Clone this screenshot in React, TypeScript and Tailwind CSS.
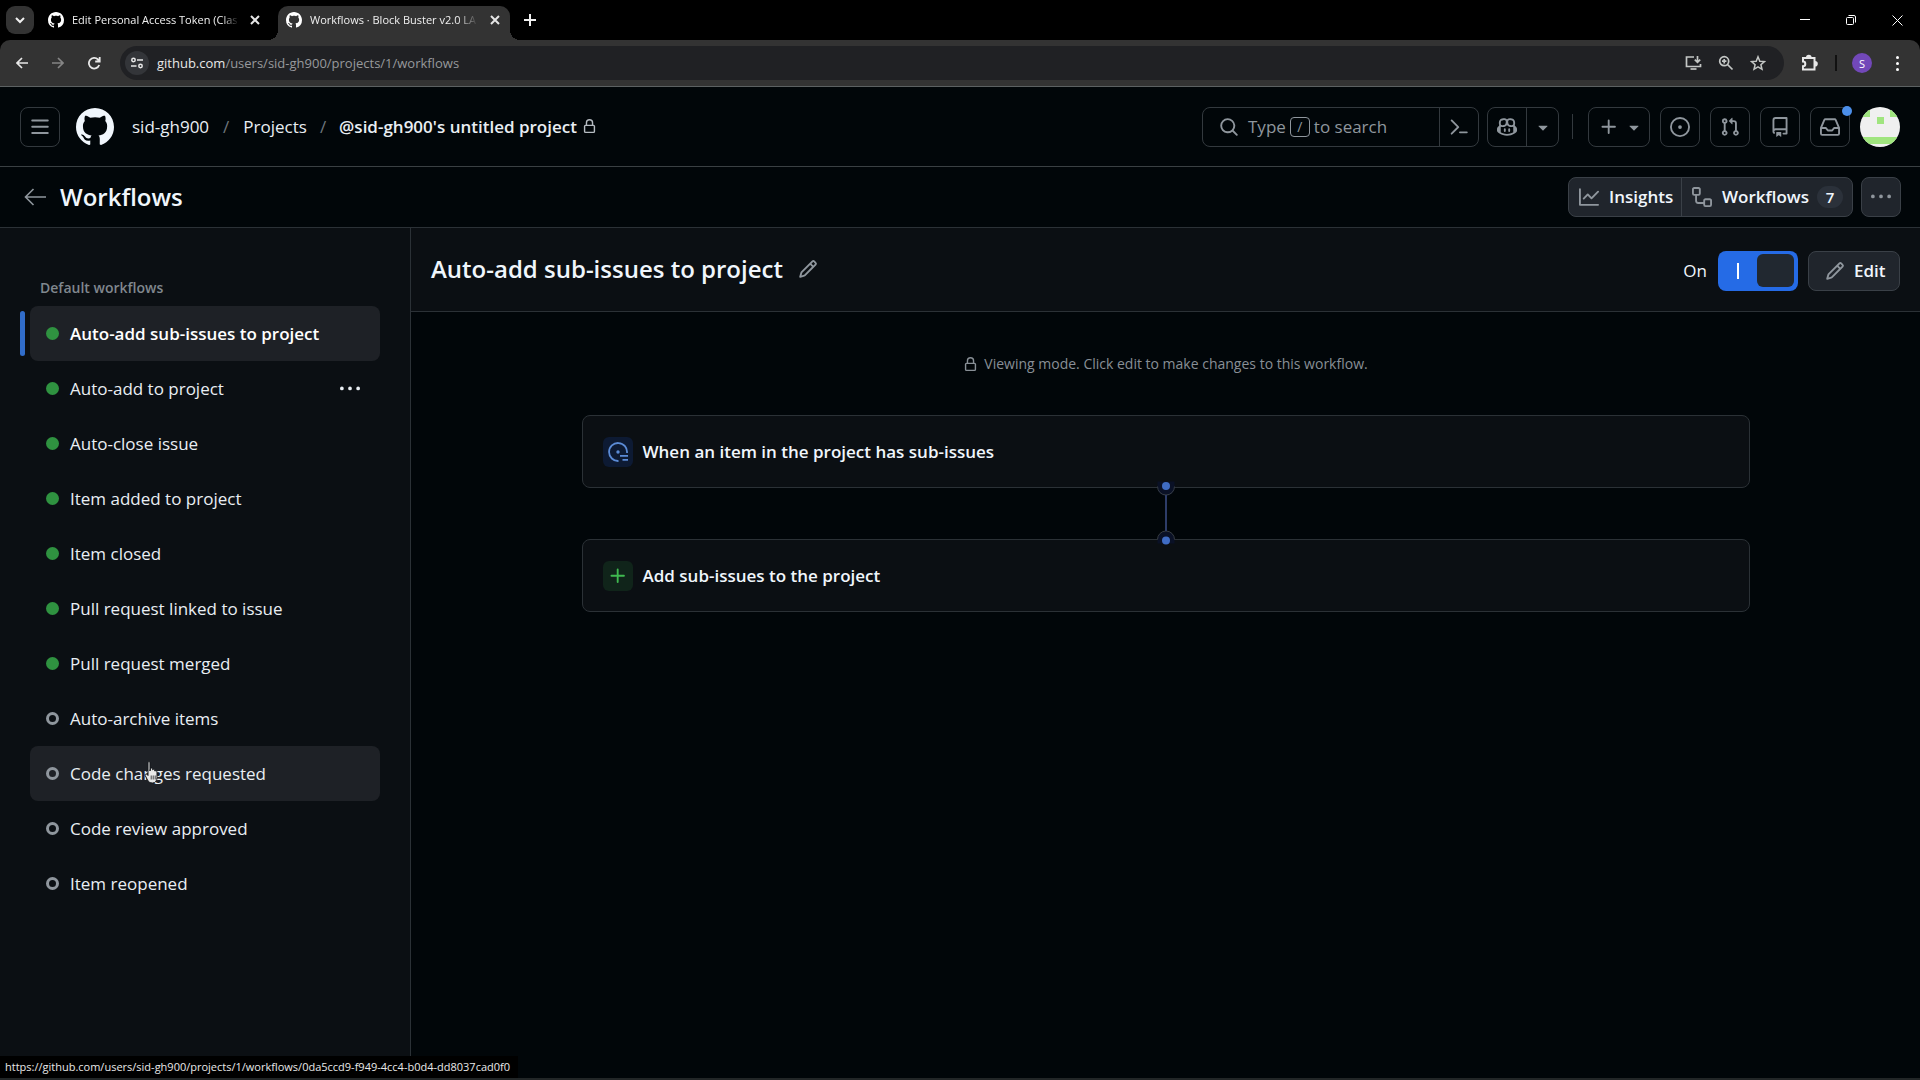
import type { ReactNode } from "react";

const PATHS = {
  github:
    "M8 0c4.42 0 8 3.58 8 8a8.013 8.013 0 0 1-5.45 7.59c-.4.08-.55-.17-.55-.38 0-.27.01-1.13.01-2.2 0-.75-.25-1.23-.54-1.48 1.78-.2 3.65-.88 3.65-3.95 0-.88-.31-1.59-.82-2.15.08-.2.36-1.02-.08-2.12 0 0-.67-.22-2.2.82-.64-.18-1.32-.27-2-.27-.68 0-1.36.09-2 .27-1.53-1.03-2.2-.82-2.2-.82-.44 1.1-.16 1.92-.08 2.12-.51.56-.82 1.28-.82 2.15 0 3.06 1.86 3.75 3.64 3.95-.23.2-.44.55-.51 1.07-.46.21-1.61.55-2.33-.66-.15-.24-.6-.83-1.23-.82-.67.01-.27.38.01.53.34.19.73.9.82 1.13.16.45.68 1.31 2.69.94 0 .67.01 1.3.01 1.49 0 .21-.15.45-.55.38A7.995 7.995 0 0 1 0 8c0-4.42 3.58-8 8-8Z",
  bars: "M1 2.75A.75.75 0 0 1 1.75 2h12.5a.75.75 0 0 1 0 1.5H1.75A.75.75 0 0 1 1 2.75Zm0 5A.75.75 0 0 1 1.75 7h12.5a.75.75 0 0 1 0 1.5H1.75A.75.75 0 0 1 1 7.75ZM1.75 12h12.5a.75.75 0 0 1 0 1.5H1.75a.75.75 0 0 1 0-1.5Z",
  lock: "M4 4a4 4 0 0 1 8 0v2h.25c.966 0 1.75.784 1.75 1.75v5.5A1.75 1.75 0 0 1 12.25 15h-8.5A1.75 1.75 0 0 1 2 13.25v-5.5C2 6.784 2.784 6 3.75 6H4Zm8.25 3.5h-8.5a.25.25 0 0 0-.25.25v5.5c0 .138.112.25.25.25h8.5a.25.25 0 0 0 .25-.25v-5.5a.25.25 0 0 0-.25-.25ZM10.5 6V4a2.5 2.5 0 1 0-5 0v2Z",
  search:
    "M10.68 11.74a6 6 0 0 1-7.922-8.982 6 6 0 0 1 8.982 7.922l3.04 3.04a.749.749 0 0 1-.326 1.275.749.749 0 0 1-.734-.215ZM11.5 7a4.499 4.499 0 1 0-8.997 0A4.499 4.499 0 0 0 11.5 7Z",
  command:
    "m6.354 8.04-4.773 4.773a.75.75 0 1 0 1.061 1.06L7.945 8.57a.75.75 0 0 0 0-1.06L2.642 2.206a.75.75 0 0 0-1.06 1.061L6.353 8.04ZM8.75 11.5a.75.75 0 0 0 0 1.5h5.5a.75.75 0 0 0 0-1.5h-5.5Z",
  copilot:
    "M7.998 15.035c-4.562 0-7.873-2.914-7.998-3.749V9.338c.085-.628.677-1.686 1.588-2.065.013-.07.024-.143.036-.218.029-.183.06-.384.126-.612-.201-.508-.254-1.084-.254-1.656 0-.87.128-1.769.693-2.484.579-.733 1.494-1.124 2.724-1.261 1.206-.134 2.262.034 2.944.765.05.053.096.108.139.165.044-.057.094-.112.143-.165.682-.731 1.738-.899 2.944-.765 1.23.137 2.145.528 2.724 1.261.566.715.693 1.614.693 2.484 0 .572-.053 1.148-.254 1.656.066.228.098.429.126.612.012.076.024.148.037.218.924.385 1.522 1.471 1.591 2.095v1.872c0 .766-3.351 3.795-8.002 3.795Zm0-1.485c2.28 0 4.584-1.11 5.002-1.433V7.862l-.023-.116c-.49.21-1.075.291-1.727.291-1.146 0-2.059-.327-2.71-.991A3.222 3.222 0 0 1 8 6.303a3.24 3.24 0 0 1-.544.743c-.65.664-1.563.991-2.71.991-.652 0-1.236-.081-1.727-.291l-.023.116v4.255c.419.323 2.722 1.433 5.002 1.433ZM6.762 2.83c-.193-.206-.637-.413-1.682-.297-1.019.113-1.479.404-1.713.7-.247.312-.369.789-.369 1.554 0 .793.129 1.171.308 1.371.162.181.519.379 1.442.379.853 0 1.339-.235 1.638-.54.315-.322.527-.827.617-1.553.117-.935-.037-1.395-.241-1.614Zm4.155-.297c-1.044-.116-1.488.091-1.681.297-.204.219-.359.679-.242 1.614.091.726.303 1.231.618 1.553.299.305.784.54 1.638.54.922 0 1.28-.198 1.442-.379.179-.2.308-.578.308-1.371 0-.765-.123-1.242-.37-1.554-.233-.296-.693-.587-1.713-.7ZM6.25 9.037a.75.75 0 0 1 .75.75v1.501a.75.75 0 0 1-1.5 0V9.787a.75.75 0 0 1 .75-.75Zm4.25.75v1.501a.75.75 0 0 1-1.5 0V9.787a.75.75 0 0 1 1.5 0Z",
  triangle:
    "m4.427 7.427 3.396 3.396a.25.25 0 0 0 .354 0l3.396-3.396A.25.25 0 0 0 11.396 7H4.604a.25.25 0 0 0-.177.427Z",
  plus: "M7.75 2a.75.75 0 0 1 .75.75V7h4.25a.75.75 0 0 1 0 1.5H8.5v4.25a.75.75 0 0 1-1.5 0V8.5H2.75a.75.75 0 0 1 0-1.5H7V2.75A.75.75 0 0 1 7.75 2Z",
  issue:
    "M8 9.5a1.5 1.5 0 1 0 0-3 1.5 1.5 0 0 0 0 3ZM8 0a8 8 0 1 1 0 16A8 8 0 0 1 8 0ZM1.5 8a6.5 6.5 0 1 0 13 0 6.5 6.5 0 0 0-13 0Z",
  pull: "M1.5 3.25a2.25 2.25 0 1 1 3 2.122v5.256a2.251 2.251 0 1 1-1.5 0V5.372A2.25 2.25 0 0 1 1.5 3.25Zm5.677-.177L9.573.677A.25.25 0 0 1 10 .854V2.5h1A2.5 2.5 0 0 1 13.5 5v5.628a2.251 2.251 0 1 1-1.5 0V5a1 1 0 0 0-1-1h-1v1.646a.25.25 0 0 1-.427.177L7.177 3.427a.25.25 0 0 1 0-.354ZM3.75 2.5a.75.75 0 1 0 0 1.5.75.75 0 0 0 0-1.5Zm0 9.5a.75.75 0 1 0 0 1.5.75.75 0 0 0 0-1.5Zm8.25.75a.75.75 0 1 0 1.5 0 .75.75 0 0 0-1.5 0Z",
  repo: "M2 2.5A2.5 2.5 0 0 1 4.5 0h8.75a.75.75 0 0 1 .75.75v12.5a.75.75 0 0 1-.75.75h-2.5a.75.75 0 0 1 0-1.5h1.75v-2h-8a1 1 0 0 0-.714 1.7.75.75 0 1 1-1.072 1.05A2.495 2.495 0 0 1 2 11.5Zm10.5-1h-8a1 1 0 0 0-1 1v6.708A2.486 2.486 0 0 1 4.5 9h8ZM5 12.25a.25.25 0 0 1 .25-.25h3.5a.25.25 0 0 1 .25.25v3.25a.25.25 0 0 1-.4.2l-1.45-1.087a.249.249 0 0 0-.3 0L5.4 15.7a.25.25 0 0 1-.4-.2Z",
  inbox:
    "M2.8 2.06A1.75 1.75 0 0 1 4.41 1h7.18c.7 0 1.333.417 1.61 1.06l2.74 6.395c.04.093.06.194.06.295v4.5A1.75 1.75 0 0 1 14.25 15H1.75A1.75 1.75 0 0 1 0 13.25v-4.5c0-.101.02-.202.06-.295Zm1.61.44a.25.25 0 0 0-.23.152L1.887 8H4.75a.75.75 0 0 1 .6.3L6.625 10h2.75l1.275-1.7a.75.75 0 0 1 .6-.3h2.863L11.82 2.652a.25.25 0 0 0-.23-.152Zm10.09 7h-2.875l-1.275 1.7a.75.75 0 0 1-.6.3h-3.5a.75.75 0 0 1-.6-.3L4.375 9.5H1.5v3.75c0 .138.112.25.25.25h12.5a.25.25 0 0 0 .25-.25Z",
  graph:
    "M1.5 1.75V13.5h13.75a.75.75 0 0 1 0 1.5H.75a.75.75 0 0 1-.75-.75V1.75a.75.75 0 0 1 1.5 0Zm14.28 2.53-5.25 5.25a.75.75 0 0 1-1.06 0L7 7.06 4.28 9.78a.751.751 0 0 1-1.042-.018.751.751 0 0 1-.018-1.042l3.25-3.25a.75.75 0 0 1 1.06 0L10 7.94l4.72-4.72a.751.751 0 0 1 1.042.018.751.751 0 0 1 .018 1.042Z",
  workflow:
    "M0 1.75C0 .784.784 0 1.75 0h3.5C6.216 0 7 .784 7 1.75v3.5A1.75 1.75 0 0 1 5.25 7H4v4a1 1 0 0 0 1 1h4v-1.25C9 9.784 9.784 9 10.75 9h3.5c.966 0 1.75.784 1.75 1.75v3.5A1.75 1.75 0 0 1 14.25 16h-3.5A1.75 1.75 0 0 1 9 14.25v-.75H5A2.5 2.5 0 0 1 2.5 11V7h-.75A1.75 1.75 0 0 1 0 5.25Zm1.75-.25a.25.25 0 0 0-.25.25v3.5c0 .138.112.25.25.25h3.5a.25.25 0 0 0 .25-.25v-3.5a.25.25 0 0 0-.25-.25Zm9 9a.25.25 0 0 0-.25.25v3.5c0 .138.112.25.25.25h3.5a.25.25 0 0 0 .25-.25v-3.5a.25.25 0 0 0-.25-.25Z",
  kebab:
    "M8 9a1.5 1.5 0 1 0 0-3 1.5 1.5 0 0 0 0 3ZM1.5 9a1.5 1.5 0 1 0 0-3 1.5 1.5 0 0 0 0 3Zm13 0a1.5 1.5 0 1 0 0-3 1.5 1.5 0 0 0 0 3Z",
  pencil:
    "M11.013 1.427a1.75 1.75 0 0 1 2.474 0l1.086 1.086a1.75 1.75 0 0 1 0 2.474l-8.61 8.61c-.21.21-.47.364-.756.445l-3.251.93a.75.75 0 0 1-.927-.928l.929-3.25c.081-.286.235-.547.445-.758l8.61-8.61Zm.176 4.823L9.75 4.81l-6.286 6.287a.253.253 0 0 0-.064.108l-.558 1.953 1.953-.558a.253.253 0 0 0 .108-.064Zm1.238-3.763a.25.25 0 0 0-.354 0L10.811 3.75l1.439 1.44 1.263-1.263a.25.25 0 0 0 0-.354Z",
};

function Octicon({ name, className = "size-5" }: { name: keyof typeof PATHS; className?: string }) {
  return (
    <svg viewBox="0 0 16 16" fill="currentColor" aria-hidden="true" className={`shrink-0 ${className}`}>
      <path d={PATHS[name]} />
    </svg>
  );
}

function Line({ children, className, box = "0 0 20 20", width = 2 }: { children: ReactNode; className: string; box?: string; width?: number }) {
  return (
    <svg viewBox={box} fill="none" stroke="currentColor" strokeWidth={width} aria-hidden="true" className={`shrink-0 ${className}`}>
      {children}
    </svg>
  );
}

function CloseGlyph() {
  return (
    <Line box="0 0 10 10" className="size-[10px] text-[#e6e6e6]">
      <path d="M1 1l8 8M9 1l-8 8" />
    </Line>
  );
}

function TabStrip() {
  return (
    <div className="flex h-10 items-end bg-black text-[11px] text-[#f0f0f0]">
      <button aria-label="Search tabs" className="mb-[6px] ml-[6px] flex h-7 w-7 items-center justify-center rounded-[9px] bg-[#333]">
        <Line box="0 0 10 10" className="size-[10px]">
          <path d="M1 3l4 4 4-4" />
        </Line>
      </button>
      <div className="ml-[14px] flex h-10 w-[212px] items-center">
        <Octicon name="github" className="size-4 text-white" />
        <span className="ml-2 w-[168px] overflow-hidden whitespace-nowrap [mask-image:linear-gradient(to_right,black_90%,transparent)]">
          Edit Personal Access Token (Clas
        </span>
        <button aria-label="Close Edit Personal Access Token" className="ml-[11px]">
          <CloseGlyph />
        </button>
      </div>
      <div className="relative ml-[18px] flex h-[34px] w-[232px] items-center rounded-t-[10px] bg-[#333] pb-[6px] pl-2">
        <span className="absolute -left-[10px] bottom-0 size-[10px] bg-[radial-gradient(circle_at_0_0,transparent_10px,#333_10px)]" />
        <span className="absolute -right-[10px] bottom-0 size-[10px] bg-[radial-gradient(circle_at_100%_0,transparent_10px,#333_10px)]" />
        <Octicon name="github" className="size-4 text-white" />
        <span className="ml-2 w-[168px] overflow-hidden whitespace-nowrap [mask-image:linear-gradient(to_right,black_88%,transparent)]">
          Workflows · Block Buster v2.0 LA
        </span>
        <button aria-label="Close Workflows" className="ml-[12px]">
          <CloseGlyph />
        </button>
      </div>
      <button aria-label="New tab" className="mb-[14px] ml-[14px]">
        <Line box="0 0 12 12" className="size-3">
          <path d="M6 0v12M0 6h12" />
        </Line>
      </button>
      <div className="mb-[14px] ml-auto mr-[17px] flex items-center gap-9 text-white">
        <button aria-label="Minimize">
          <Line box="0 0 10 12" width={1} className="h-3 w-[10px]">
            <path d="M0 5.500h10" />
          </Line>
        </button>
        <button aria-label="Restore">
          <Line box="0 0 10 10" width={1} className="size-[10px]">
            <rect x=".5" y="2.500" width="7" height="7" rx="1" />
            <path d="M2.500 .5H8a1.500 1.500 0 0 1 1.500 1.500v5.500" />
          </Line>
        </button>
        <button aria-label="Close window">
          <Line box="0 0 11 11" width={1} className="size-[11px]">
            <path d="M.5 .5l10 10M10.500 .5l-10 10" />
          </Line>
        </button>
      </div>
    </div>
  );
}

function Toolbar() {
  return (
    <div className="bg-black">
      <div className="flex h-[47px] items-center rounded-t-[10px] border-b border-[#5c6162] bg-[#333] pb-1 pt-1 text-[#e8e8e8]">
        <button aria-label="Back" className="ml-4">
          <Line box="0 0 12 12" width={1.700} className="size-3">
            <path d="M12 6H1M6 1L1 6l5 5" />
          </Line>
        </button>
        <button aria-label="Forward" className="ml-6 text-[#858585]">
          <Line box="0 0 12 12" width={1.700} className="size-3">
            <path d="M0 6h11M6 1l5 5-5 5" />
          </Line>
        </button>
        <button aria-label="Reload" className="ml-[23px]">
          <Line box="0 0 14 14" width={1.800} className="size-[14px]">
            <path d="M12.200 9A5.300 5.300 0 1 1 11 3.500L12.500 5M12.700 1v4.500H8.200" />
          </Line>
        </button>
        <div className="ml-[19px] flex h-[34px] flex-1 items-center rounded-full bg-[#202124] pl-[5px] pr-[18px]">
          <button aria-label="View site information" className="flex size-6 items-center justify-center rounded-full bg-[#333539]">
            <Line box="0 0 12 12" width={1.500} className="size-3">
              <circle cx="2.500" cy="3" r="1.700" />
              <path d="M6 3h6M0 9h5.500" />
              <circle cx="9.500" cy="9" r="1.700" />
            </Line>
          </button>
          <label className="relative ml-[8px] flex-1 text-[13px] leading-5">
            <span aria-hidden="true">
              github.com<span className="text-[#97999c]">/users/sid-gh900/projects/1/workflows</span>
            </span>
            <input
              aria-label="Address"
              defaultValue="github.com/users/sid-gh900/projects/1/workflows"
              className="absolute inset-0 w-full bg-transparent text-transparent outline-none"
            />
          </label>
          <div className="flex items-center gap-4 text-[#c4c7c5]">
            <button aria-label="Install app">
              <Line box="0 0 17 16" width={1.700} className="h-4 w-[17px]">
                <path d="M9 2H1.500v9.500h14V9M12.500 1v6M9.800 4.700l2.700 2.700 2.700-2.700" />
                <path d="M5.500 14h6" />
              </Line>
            </button>
            <button aria-label="Zoom">
              <Line box="0 0 16 16" width={1.700} className="size-4">
                <circle cx="6.200" cy="6.200" r="4.500" />
                <path d="M9.500 9.500l5 5M6.200 4v4.400M4 6.200h4.400" />
              </Line>
            </button>
            <button aria-label="Bookmark this tab">
              <Line box="0 0 16 16" width={1.500} className="size-4">
                <path d="M8 1.800l1.800 4.400 4.700.4-3.600 3.100 1.100 4.600L8 11.900l-4 2.400 1.100-4.600L1.500 6.600l4.700-.4z" />
              </Line>
            </button>
          </div>
        </div>
        <button aria-label="Extensions" className="ml-[17px]">
          <Line box="0 0 17 18" width={2} className="h-[18px] w-[17px]">
            <path d="M2 4h11.500v11.500H2v-3.300a2.300 2.300 0 0 0 0-4.600z" />
            <path d="M6 3.500a1.800 1.800 0 0 1 3.600 0zM14 7.900a1.800 1.800 0 0 1 0 3.600z" fill="currentColor" />
          </Line>
        </button>
        <span className="ml-[17px] h-4 w-[2px] bg-[#111]" />
        <button aria-label="Profile S" className="ml-[15px] flex size-5 items-center justify-center rounded-full bg-[#7248b9] text-[11px] leading-none text-white">
          S
        </button>
        <button aria-label="Chrome menu" className="ml-[24px] mr-[21px] flex flex-col gap-[3px]">
          <span className="size-[3px] rounded-full bg-white" />
          <span className="size-[3px] rounded-full bg-white" />
          <span className="size-[3px] rounded-full bg-white" />
        </button>
      </div>
    </div>
  );
}

function HeaderButton({ label, children }: { label: string; children: ReactNode }) {
  return (
    <button aria-label={label} className="relative flex size-10 items-center justify-center rounded-lg border border-[#33393e]">
      {children}
    </button>
  );
}

function SiteHeader() {
  return (
    <header className="flex h-20 items-center border-b border-[#3a4043] px-5 text-[17px] text-[#8f969d]">
      <HeaderButton label="Open menu">
        <Octicon name="bars" />
      </HeaderButton>
      <a href="#home" aria-label="Homepage" className="ml-4 text-[#f0f6fc]">
        <Octicon name="github" className="size-[38px]" />
      </a>
      <nav aria-label="Breadcrumb" className="ml-[18px] flex items-center text-[#e9eef3]">
        <a href="#owner">sid-gh900</a>
        <span className="mx-[14px] text-[#6f767d]">/</span>
        <a href="#projects">Projects</a>
        <span className="mx-[13px] text-[#6f767d]">/</span>
        <a href="#project" className="font-semibold">
          @sid-gh900's untitled project
        </a>
        <Octicon name="lock" className="ml-[5px] size-[15px] text-[#b5bbc1]" />
      </nav>
      <div className="ml-auto flex items-center">
        <div className="flex h-10 items-stretch rounded-lg border border-[#33393e]">
          <button className="flex w-[236px] items-center pl-4">
            <Octicon name="search" />
            <span className="ml-[9px]">Type</span>
            <kbd className="mx-1 flex size-5 items-center justify-center rounded border border-[#8f969d] font-[inherit] text-[14px] leading-none">/</kbd>
            <span>to search</span>
          </button>
          <button aria-label="Command palette" className="flex w-[39px] items-center justify-center border-l border-[#33393e]">
            <Octicon name="command" />
          </button>
        </div>
        <div className="ml-2 flex h-10 items-stretch rounded-lg border border-[#33393e]">
          <button aria-label="Copilot" className="flex w-[38px] items-center justify-center">
            <Octicon name="copilot" />
          </button>
          <button aria-label="Open Copilot menu" className="flex w-8 items-center justify-center border-l border-[#33393e]">
            <Octicon name="triangle" />
          </button>
        </div>
        <span className="ml-[13px] mr-[15px] h-[25px] w-px bg-[#33393e]" />
        <button aria-label="Create new" className="mr-[10px] flex h-10 w-[62px] items-center gap-[5px] rounded-lg border border-[#33393e] pl-[10px]">
          <Octicon name="plus" />
          <Octicon name="triangle" />
        </button>
        <div className="flex gap-[10px]">
          <HeaderButton label="Issues">
            <Octicon name="issue" />
          </HeaderButton>
          <HeaderButton label="Pull requests">
            <Octicon name="pull" />
          </HeaderButton>
          <HeaderButton label="Repositories">
            <Octicon name="repo" />
          </HeaderButton>
          <HeaderButton label="Notifications">
            <Octicon name="inbox" />
            <span className="absolute -right-[3px] -top-[2px] size-[10px] rounded-full bg-[#4c8fea]" />
          </HeaderButton>
          <button aria-label="Open user menu" className="size-10 overflow-hidden rounded-full">
            <svg viewBox="0 0 40 40" className="size-10" aria-hidden="true">
              <rect width="40" height="40" fill="#f0f0f0" />
              <path d="M3 3h7v7H3zM30 3h7v7h-7zM17 10h7v7h-7zM3 30h34v7H3z" fill="#a0e57f" />
            </svg>
          </button>
        </div>
      </div>
    </header>
  );
}

function ProjectBar() {
  return (
    <div className="flex h-[61px] items-center border-b border-[#2b3136] pl-6 pr-[19px] text-[17px] font-semibold text-[#f0f6fc]">
      <a href="#back" aria-label="Back to project" className="text-[#8f969d]">
        <Line box="0 0 22 18" width={1.600} className="h-[18px] w-[22px]">
          <path d="M22 9H1.500M9.500 1L1.500 9l8 8" />
        </Line>
      </a>
      <h1 className="ml-[14px] text-[24px] leading-8">Workflows</h1>
      <div className="ml-auto flex h-10 items-stretch rounded-lg border border-[#3a4047] bg-[#20252c]">
        <a href="#insights" className="flex w-[112px] items-center gap-[10px] pl-[10px]">
          <Octicon name="graph" className="size-5 text-[#8f969d]" />
          Insights
        </a>
        <a href="#workflows" className="flex w-[171px] items-center border-l border-[#3a4047] pl-[10px]">
          <Octicon name="workflow" className="size-5 text-[#8f969d]" />
          <span className="ml-[10px]">Workflows</span>
          <span className="ml-2 flex h-[22px] w-[26px] items-center justify-center rounded-full bg-[#2b313a] text-[15px]">7</span>
        </a>
      </div>
      <button aria-label="More options" className="ml-2 flex size-10 items-center justify-center rounded-lg border border-[#3a4047] bg-[#20252c] text-[#8f969d]">
        <Octicon name="kebab" />
      </button>
    </div>
  );
}

type Workflow = { name: string; on: boolean; state?: "selected" | "menu" | "hover" };

const WORKFLOWS: Workflow[] = [
  { name: "Auto-add sub-issues to project", on: true, state: "selected" },
  { name: "Auto-add to project", on: true, state: "menu" },
  { name: "Auto-close issue", on: true },
  { name: "Item added to project", on: true },
  { name: "Item closed", on: true },
  { name: "Pull request linked to issue", on: true },
  { name: "Pull request merged", on: true },
  { name: "Auto-archive items", on: false },
  { name: "Code changes requested", on: false, state: "hover" },
  { name: "Code review approved", on: false },
  { name: "Item reopened", on: false },
];

function HandPointer() {
  return (
    <svg viewBox="0 0 16 24" className="pointer-events-none absolute left-[114px] top-[15px] h-6 w-4" aria-hidden="true">
      <path
        d="M4 1.500c0-1 2-1 2 0V10l.5-2.500c.3-.9 1.900-.7 1.900.3l.3 1c.4-.8 1.900-.6 1.900.4l.3.900c.6-.8 2.100-.4 2.100.8v5.600c0 3-1.500 5.500-4.500 5.500-2.500 0-3.800-1-5-3L1.200 14.500c-.5-1.200.9-2 1.700-1.200L4 14.500z"
        fill="#e8e8e8"
        stroke="#15181c"
        strokeWidth="1"
      />
      <path d="M7.200 14.500v4M9.200 14.500v4M11.200 14.500v4" stroke="#15181c" strokeWidth=".8" />
    </svg>
  );
}

function Sidebar() {
  return (
    <aside className="w-[411px] shrink-0 border-r border-[#2b3136] bg-[#0b0f13] px-[30px] pt-[50px]">
      <h2 className="pl-[10px] text-[14px] font-semibold leading-5 text-[#80878e]">Default workflows</h2>
      <ul className="mt-2 text-[17px] text-[#e9eef3]">
        {WORKFLOWS.map((w) => (
          <li
            key={w.name}
            className={`relative flex h-[55px] items-center rounded-lg ${
              w.state === "selected" || w.state === "hover" ? "bg-[#1e2126]" : ""
            } ${w.state === "selected" ? "font-semibold text-white" : ""}`}
          >
            {w.state === "selected" && <span className="absolute -left-[10px] inset-y-[5px] w-[5px] rounded-full bg-[#316dca]" />}
            <a href="#workflow" className="flex flex-1 items-center pl-4">
              <span
                className={`size-[13px] rounded-full ${w.on ? "bg-[#2f9240]" : "border-[3px] border-[#8f969d]"}`}
              />
              <span className="ml-[11px]">{w.name}</span>
            </a>
            {w.state === "menu" && (
              <button aria-label="Workflow options" className="mr-5">
                <Octicon name="kebab" />
              </button>
            )}
            {w.state === "hover" && <HandPointer />}
          </li>
        ))}
      </ul>
    </aside>
  );
}

function StepCard({ icon, children }: { icon: ReactNode; children: ReactNode }) {
  return (
    <div className="flex h-[73px] items-center gap-[10px] rounded-lg border border-[#2b3136] bg-[#0b0f13] px-5 text-[17px] font-semibold text-[#f0f6fc]">
      {icon}
      {children}
    </div>
  );
}

function Connector() {
  return (
    <svg viewBox="0 0 20 71" className="relative z-10 mx-auto -my-[10px] h-[71px] w-5" aria-hidden="true">
      <path d="M1.500 9.500v-6h17v6a8.500 8.500 0 0 1-17 0zM1.500 61.500a8.500 8.500 0 0 1 17 0v4h-17z" fill="#0a1126" />
      <path d="M1.500 8.500a8.500 8.500 0 0 0 17 0M1.500 61.500a8.500 8.500 0 0 1 17 0" fill="none" stroke="#363c42" />
      <path d="M10 17v36" stroke="#2d3c68" strokeWidth="2" />
      <circle cx="10" cy="8" r="4" fill="#3f6cc4" />
      <circle cx="10" cy="62.500" r="4" fill="#3f6cc4" />
    </svg>
  );
}

function MainPanel() {
  return (
    <main className="min-w-0 flex-1">
      <div className="flex h-[84px] items-center border-b border-[#2b3136] bg-[#0b0f13] px-5 pt-[2px] text-[17px] text-[#f0f6fc]">
        <div className="flex items-center gap-[15px] pb-1">
          <h2 className="text-[24px] font-semibold leading-8">Auto-add sub-issues to project</h2>
          <button aria-label="Rename workflow" className="text-[#8f969d]">
            <Octicon name="pencil" />
          </button>
        </div>
        <label className="ml-auto flex items-center gap-[11px]">
          <span>On</span>
          <input type="checkbox" role="switch" defaultChecked className="peer sr-only" />
          <span className="flex h-10 w-20 items-center rounded-lg bg-[#256be6] p-1">
            <span className="ml-[15px] h-4 w-[2px] bg-white" />
            <span className="ml-auto h-[33px] w-[37px] rounded-md bg-[#212830]" />
          </span>
        </label>
        <button className="ml-[10px] flex h-10 w-[92px] items-center gap-[9px] rounded-lg border border-[#3a4047] bg-[#20252c] pl-4 font-semibold">
          <Octicon name="pencil" className="size-5 text-[#8f969d]" />
          Edit
        </button>
      </div>
      <section className="mx-auto max-w-[1168px] pt-[42px]">
        <p className="flex items-center justify-center gap-[6px] text-[14px] leading-5 text-[#888f96]">
          <Octicon name="lock" className="size-[15px]" />
          Viewing mode. Click edit to make changes to this workflow.
        </p>
        <div className="mt-[41px]">
          <StepCard
            icon={
              <span className="flex size-[30px] items-center justify-center rounded-md bg-[#0d1a33] text-[#5b8bd6]">
                <Line box="0 0 20 20" width={1.800} className="size-5">
                  <path d="M19 11A9 9 0 1 0 10.500 19" />
                  <circle cx="10" cy="10" r="1.700" fill="currentColor" stroke="none" />
                  <path d="M12 13.800h8M14.500 17.800H20" />
                </Line>
              </span>
            }
          >
            When an item in the project has sub-issues
          </StepCard>
          <Connector />
          <StepCard
            icon={
              <span className="flex size-[30px] items-center justify-center rounded-md bg-[#10241a] text-[#3fb950]">
                <Octicon name="plus" />
              </span>
            }
          >
            Add sub-issues to the project
          </StepCard>
        </div>
      </section>
    </main>
  );
}

export default function App() {
  return (
    <div className="relative flex min-h-screen flex-col bg-[#010609] font-['Open_Sans','Noto_Sans',sans-serif]">
      <TabStrip />
      <Toolbar />
      <SiteHeader />
      <ProjectBar />
      <div className="flex flex-1">
        <Sidebar />
        <MainPanel />
      </div>
      <div className="absolute inset-x-0 bottom-0 flex border-b-2 border-[#222627]">
        <div className="h-[22px] whitespace-nowrap bg-black pl-[5px] pr-2 text-[11px] leading-[22px] text-[#e8e8e8]">
          https://github.com/users/sid-gh900/projects/1/workflows/0da5ccd9-f949-4cc4-b0d4-dd8037cad0f0
        </div>
      </div>
    </div>
  );
}
